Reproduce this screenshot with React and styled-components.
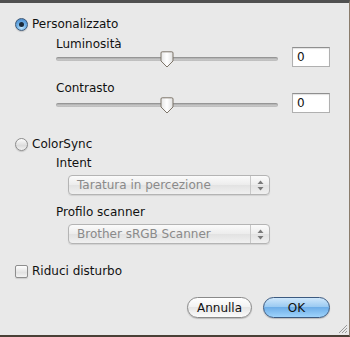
import React from 'react';
import styled, { createGlobalStyle } from 'styled-components';

const Global = createGlobalStyle`
    html, body {
        margin: 0;
        padding: 0;
        background: #e8e8e8;
    }
    body {
        font-family: "DejaVu Sans", "Liberation Sans", sans-serif;
        font-size: 12px;
        color: #111;
    }
`;

const Sheet = styled.div`
    box-sizing: border-box;
    width: 350px;
    height: 337px;
    background: #e9e9e9;
    border-top: 3px solid #505050;
    border-bottom: 2px solid #4a4036;
    border-right: 1px solid #8a7c6c;
    display: flex;
    flex-direction: column;
    position: relative;
    padding: 13px 0 0 15px;
`;

const Row = styled.div`
    display: flex;
    align-items: center;
    height: ${p => p.$h || 16}px;
    margin-top: ${p => p.$mt || 0}px;
    padding-left: ${p => p.$indent || 0}px;
`;

const Label = styled.span`
    font-size: 12px;
    line-height: 16px;
    white-space: nowrap;
`;

const RadioDot = styled.span`
    box-sizing: border-box;
    width: 13px;
    height: 13px;
    border-radius: 50%;
    margin-right: 4px;
    display: flex;
    align-items: center;
    justify-content: center;
    border: 1px solid ${p => (p.$on ? '#3d5876' : '#8c8c8c')};
    background: ${p =>
        p.$on
            ? 'radial-gradient(circle at 50% 75%, #c8eaff 0%, #6fb0e6 45%, #3f7fc4 100%)'
            : 'linear-gradient(#fdfdfd, #dcdcdc 60%, #f2f2f2)'};
    box-shadow: 0 1px 1px rgba(0,0,0,0.15);

    &::after {
        content: '';
        display: ${p => (p.$on ? 'block' : 'none')};
        width: 5px;
        height: 5px;
        border-radius: 50%;
        background: #1a2a3a;
    }
`;

const CheckBox = styled.span`
    box-sizing: border-box;
    width: 13px;
    height: 13px;
    border: 1px solid #8e8e8e;
    border-radius: 2px;
    margin-right: 4px;
    background: linear-gradient(#fefefe, #e2e2e2 60%, #f4f4f4);
    box-shadow: 0 1px 1px rgba(0,0,0,0.12);
`;

const SliderRow = styled.div`
    display: flex;
    align-items: center;
    height: 12px;
    margin-top: ${p => p.$mt || 0}px;
    padding-left: 41px;
`;

const Track = styled.div`
    position: relative;
    width: 222px;
    height: 4px;
    border-radius: 2px;
    margin-top: 3px;
    background: linear-gradient(#9a9a9a, #c4c4c4 60%, #d6d6d6);
    box-shadow: inset 0 0 0 1px rgba(0,0,0,0.08);
`;

const Thumb = styled.svg`
    position: absolute;
    top: -6px;
    left: ${p => p.$pos}%;
    transform: translateX(-50%);
`;

const NumBox = styled.div`
    box-sizing: border-box;
    flex: none;
    width: 38px;
    height: 20px;
    margin-left: 14px;
    background: #fff;
    border: 1px solid #b0b0b0;
    border-top-color: #8f8f8f;
    box-shadow: inset 0 1px 1px rgba(0,0,0,0.12);
    font-size: 12px;
    line-height: 18px;
    padding-left: 4px;
`;

const Popup = styled.div`
    box-sizing: border-box;
    display: flex;
    align-items: stretch;
    width: 202px;
    height: 20px;
    margin-left: 53px;
    margin-top: ${p => p.$mt || 0}px;
    border: 1px solid #b4b4b4;
    border-radius: 4px;
    background: linear-gradient(#fbfbfb, #ececec 50%, #e2e2e2 51%, #f0f0f0);
    box-shadow: 0 1px 1px rgba(0,0,0,0.1);
    color: #8a8a8a;
`;

const PopupText = styled.span`
    flex: 1;
    font-size: 12px;
    line-height: 18px;
    padding-left: 8px;
    white-space: nowrap;
`;

const PopupArrows = styled.span`
    width: 18px;
    border-left: 1px solid #c8c8c8;
    display: flex;
    align-items: center;
    justify-content: center;
`;

const Footer = styled.div`
    display: flex;
    justify-content: flex-end;
    gap: 11px;
    margin-top: 18px;
    padding-right: 19px;
`;

const Button = styled.button`
    box-sizing: border-box;
    height: 21px;
    width: ${p => p.$w}px;
    border-radius: 11px;
    font-family: "DejaVu Sans", "Liberation Sans", sans-serif;
    font-size: 12px;
    color: #111;
    padding: 0;
    border: 1px solid ${p => (p.$primary ? '#3c5a80' : '#8a8a8a')};
    background: ${p =>
        p.$primary
            ? 'linear-gradient(#cfe7fb, #9ccbf2 45%, #6eaee8 50%, #9ed3fb 100%)'
            : 'linear-gradient(#ffffff, #f3f3f3 45%, #e6e6e6 50%, #fbfbfb 100%)'};
    box-shadow: 0 1px 1px rgba(0,0,0,0.2);
`;

const Grip = styled.svg`
    position: absolute;
    right: 1px;
    bottom: 1px;
`;

const SliderLine = ({ value, mt }) => (
    <SliderRow $mt={mt}>
        <Track>
            <Thumb $pos={50} width="15" height="17" viewBox="0 0 15 17">
                <defs>
                    <linearGradient id="tg" x1="0" y1="0" x2="1" y2="0">
                        <stop offset="0" stopColor="#e6e6e6" />
                        <stop offset="0.5" stopColor="#ffffff" />
                        <stop offset="1" stopColor="#e0e0e0" />
                    </linearGradient>
                </defs>
                <path d="M1.5 2 Q1.5 0.8 2.7 0.8 H12.3 Q13.5 0.8 13.5 2 V10 L7.5 16 L1.5 10 Z" fill="url(#tg)" stroke="#7d7468" strokeWidth="1" />
            </Thumb>
        </Track>
        <NumBox>{value}</NumBox>
    </SliderRow>
);

const Arrows = () => (
    <svg width="7" height="11" viewBox="0 0 7 11">
        <path d="M3.5 0.5 L6.5 4 H0.5 Z" fill="#7a7a7a" />
        <path d="M3.5 10.5 L6.5 7 H0.5 Z" fill="#7a7a7a" />
    </svg>
);

const App = () => {
    return (
        <Sheet>
            <Global />
            <Row>
                <RadioDot $on />
                <Label>Personalizzato</Label>
            </Row>
            <Row $h={14} $mt={5} $indent={41}>
                <Label>Luminosità</Label>
            </Row>
            <SliderLine value="0" />
            <Row $h={14} $mt={18} $indent={41}>
                <Label>Contrasto</Label>
            </Row>
            <SliderLine value="0" mt={2} />

            <Row $mt={27}>
                <RadioDot />
                <Label>ColorSync</Label>
            </Row>
            <Row $h={14} $mt={4} $indent={41}>
                <Label>Intent</Label>
            </Row>
            <Popup $mt={5}>
                <PopupText>Taratura in percezione</PopupText>
                <PopupArrows><Arrows /></PopupArrows>
            </Popup>
            <Row $h={14} $mt={10} $indent={41}>
                <Label>Profilo scanner</Label>
            </Row>
            <Popup $mt={5}>
                <PopupText>Brother sRGB Scanner</PopupText>
                <PopupArrows><Arrows /></PopupArrows>
            </Popup>

            <Row $mt={19}>
                <CheckBox />
                <Label>Riduci disturbo</Label>
            </Row>

            <Footer>
                <Button $w={65}>Annulla</Button>
                <Button $w={67} $primary>OK</Button>
            </Footer>

            <Grip width="11" height="11" viewBox="0 0 11 11">
                <path d="M10 2 L2 10 M10 5 L5 10 M10 8 L8 10" stroke="#9a9a9a" strokeWidth="1" />
            </Grip>
        </Sheet>
    );
};

export default App;
